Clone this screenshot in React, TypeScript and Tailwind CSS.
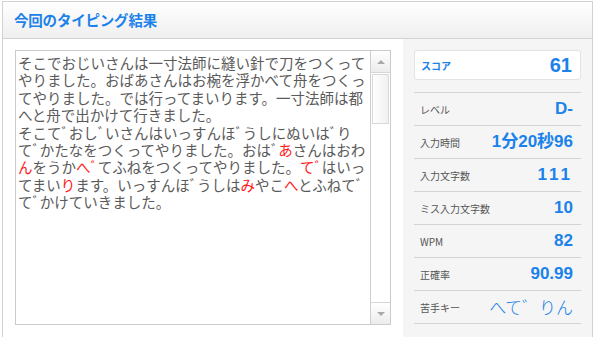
import React from "react";

const jp = "font-['Noto_Sans_CJK_JP',sans-serif]";
const num = "font-['Liberation_Sans','Noto_Sans_CJK_JP',sans-serif]";

type Seg = { t: string; miss?: boolean };

// 入力された文（ミスした文字は赤）
const lines: Seg[][] = [
  [{ t: "そこでおじいさんは一寸法師に縫い針で刀をつくって" }],
  [{ t: "やりました。おばあさんはお椀を浮かべて舟をつくっ" }],
  [{ t: "てやりました。では行ってまいります。一寸法師は都" }],
  [{ t: "へと舟で出かけて行きました。" }],
  [{ t: "そこてﾞおしﾞいさんはいっすんほﾞうしにぬいはﾞり" }],
  [{ t: "てﾞかたなをつくってやりました。おはﾞ" }, { t: "あ", miss: true }, { t: "さんはおわ" }],
  [
    { t: "ん", miss: true },
    { t: "をうか" },
    { t: "へ", miss: true },
    { t: "ﾞてふねをつくってやりました。" },
    { t: "てﾞ", miss: true },
    { t: "はいっ" },
  ],
  [
    { t: "てまい" },
    { t: "り", miss: true },
    { t: "ます。いっすんほﾞうしは" },
    { t: "み", miss: true },
    { t: "やこ" },
    { t: "へ", miss: true },
    { t: "とふねてﾞ" },
  ],
  [{ t: "てﾞかけていきました。" }],
];

const stats = [
  { label: "レベル", value: "D-" },
  { label: "入力時間", value: "1分20秒96" },
  { label: "入力文字数", value: "111" },
  { label: "ミス入力文字数", value: "10" },
  { label: "WPM", value: "82" },
  { label: "正確率", value: "90.99" },
];

function ScrollBar() {
  return (
    <div className="w-[20px] border-l border-[#cfcfcf] bg-white flex flex-col">
      <div className="h-[22px] border-b border-[#d6d6d6] bg-gradient-to-b from-white to-[#ececec] flex items-center justify-center">
        <div className="w-0 h-0 border-x-[4px] border-x-transparent border-b-[4px] border-b-[#a9a9a9]" />
      </div>
      <div className="mx-[1px] mt-[1px] h-[50px] border border-[#d9d9d9] bg-gradient-to-r from-white to-[#f0f0f0]" />
      <div className="flex-1" />
      <div className="h-[22px] border-t border-[#d6d6d6] bg-gradient-to-b from-white to-[#ececec] flex items-center justify-center">
        <div className="w-0 h-0 border-x-[4px] border-x-transparent border-t-[4px] border-t-[#a9a9a9]" />
      </div>
    </div>
  );
}

export default function App() {
  return (
    <div className="ml-[2px] mt-[1px] w-[591px] h-[400px] border border-[#d2d2d2] bg-white">
      <div className="h-[37px] border-b border-[#d2d2d2] bg-gradient-to-b from-white to-[#efefef] flex items-center pl-[11px]">
        <h2 className={`${jp} text-[14.5px] font-bold text-[#1a82ea] tracking-[-0.2px]`}>今回のタイピング結果</h2>
      </div>

      <div className="flex">
        <div className="w-[400px] pl-[12px] pt-[11px]">
          <div className="w-[376px] h-[275px] border border-[#cbcbcb] flex">
            <div className={`${jp} flex-1 pl-[2px] pt-[3px] text-[14.5px] leading-[17.4px] text-[#5a5a5a] whitespace-pre`}>
              {lines.map((line, i) => (
                <div key={i}>
                  {line.map((s, j) => (
                    <span key={j} className={s.miss ? "text-[#ff1a1a]" : ""}>
                      {s.t}
                    </span>
                  ))}
                </div>
              ))}
            </div>
            <ScrollBar />
          </div>
        </div>

        <div className="flex-1 h-[360px] bg-[#f5f5f5] px-[11px] pt-[11px]">
          <div className="h-[30px] rounded-[3px] border border-[#e3e3e3] bg-white flex items-center justify-between pl-[6px] pr-[8px]">
            <span className={`${jp} text-[10px] font-bold text-[#1a82ea]`}>スコア</span>
            <span className={`${num} text-[20px] font-bold text-[#1a82ea]`}>61</span>
          </div>

          <div className="mt-[12px] border-t border-[#d3d3d3]">
            {stats.map((s) => (
              <div key={s.label} className="h-[33px] border-b border-[#d3d3d3] flex items-center justify-between pl-[6px] pr-[8px]">
                <span className={`${jp} text-[10px] text-[#555555]`}>{s.label}</span>
                <span className={`${num} text-[17px] font-bold text-[#1a82ea] ${s.value === "111" ? "tracking-[3px]" : ""}`}>
                  {s.value}
                </span>
              </div>
            ))}
            <div className="h-[33px] border-b border-[#d3d3d3] flex items-center justify-between pl-[6px] pr-[8px]">
              <span className={`${jp} text-[10px] text-[#555555]`}>苦手キー</span>
              <span className={`${jp} text-[17px] font-light text-[#1a82ea]`}>へて゛りん</span>
            </div>
          </div>
        </div>
      </div>
    </div>
  );
}
